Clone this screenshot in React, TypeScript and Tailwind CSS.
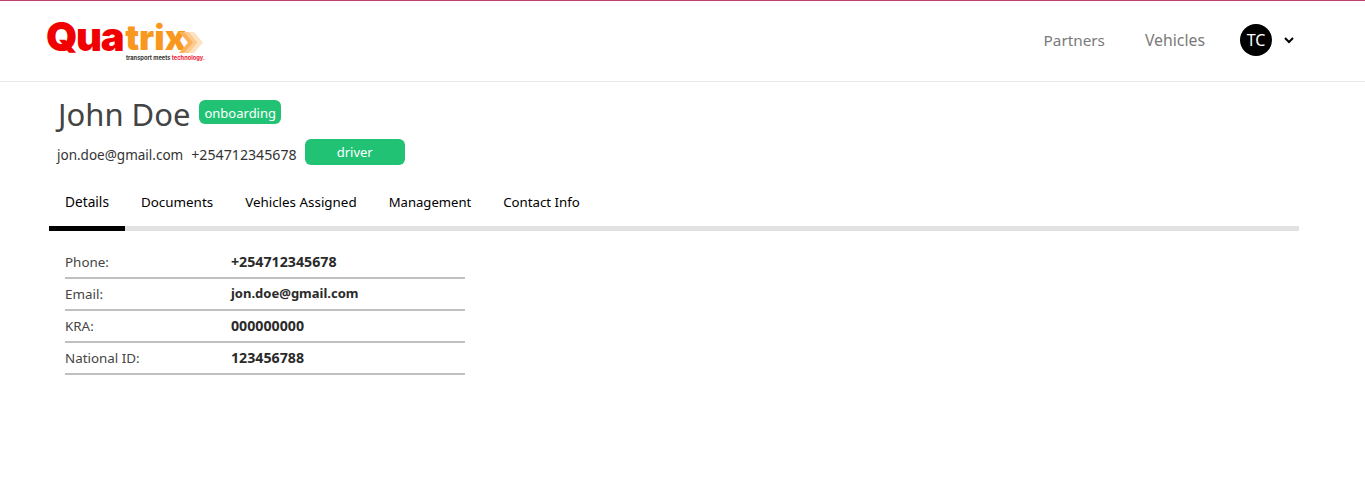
const tabs = [
  { name: "Details", size: "text-[13.7px]" },
  { name: "Documents", size: "text-[13.4px]" },
  { name: "Vehicles Assigned", size: "text-[13.4px]" },
  { name: "Management", size: "text-[13.1px]" },
  { name: "Contact Info", size: "text-[13.25px]" },
]

const rows = [
  { label: "Phone:", value: "+254712345678", size: "text-[14.2px]" },
  { label: "Email:", value: "jon.doe@gmail.com", size: "text-[13px]" },
  { label: "KRA:", value: "000000000", size: "text-[14.2px]" },
  { label: "National ID:", value: "123456788", size: "text-[14.2px]" },
]

function Logo() {
  return (
    <div className="relative h-[44px] w-[160px] font-['Inter',sans-serif]">
      <div className="flex h-[32px] items-center pt-[3px]">
        <span className="text-[40px] font-black leading-[32px] tracking-[-1.4px] text-[#f00000]">Qua</span>
        <span className="ml-[2px] text-[35px] font-black leading-[32px] text-[#f9981f]">trix</span>
      </div>
      {/* fading chevrons on the x */}
      <svg className="absolute left-[133px] top-[13px]" width="24" height="21" viewBox="0 0 24 21" fill="none">
        <path d="M0 0h6l9 10.5L6 21H0l9-10.5z" fill="#fbb05a" />
        <path d="M5 0h5l9 10.5L10 21H5l9-10.5z" fill="#fdca90" />
        <path d="M10 0h5l9 10.5L15 21h-5l9-10.5z" fill="#fee2c2" />
      </svg>
      <div className="absolute left-[80px] top-[36px] whitespace-nowrap text-[5.7px] font-bold leading-none text-[#333]">
        transport meets <span className="text-[#f0203a]">technology.</span>
      </div>
    </div>
  )
}

export default function App() {
  return (
    <div className="min-h-[480px] bg-white font-['Noto_Sans',sans-serif]">
      <header className="flex h-[82px] items-center justify-between border-t border-b border-t-[#c2406f] border-b-[#e8e8e8] pl-[46px] pr-[70px]">
        <Logo />
        <nav className="flex items-center pb-[2px] text-[#7a7a7a]">
          <a className="mr-10 -mt-[1px] text-[15.3px] leading-6">Partners</a>
          <a className="mr-[35px] text-[15.8px] leading-6">Vehicles</a>
          <div className="flex h-8 w-8 items-center justify-center rounded-full bg-black text-base text-white">TC</div>
          <svg className="ml-[11px]" width="12" height="12" viewBox="0 0 12 12" fill="none">
            <path d="M2 4l4 4 4-4" stroke="#000" strokeWidth="2" />
          </svg>
        </nav>
      </header>

      <main className="pl-[49px] pr-[66px]">
        <div className="flex items-start pl-[9px] pt-[10px]">
          <h1 className="text-[31px] leading-[44px] text-[#444]">John Doe</h1>
          <span className="ml-[9px] mt-[8px] rounded-md bg-[#22c275] px-[5px] pt-[2px] text-[13px] leading-[22px] text-white">onboarding</span>
        </div>
        <div className="mt-[3px] flex h-[26px] items-start pl-2 text-[#333]">
          <span className="mt-[6px] text-[13.5px] leading-5">jon.doe@gmail.com</span>
          <span className="ml-2 mt-[6px] text-[14.2px] leading-5">+254712345678</span>
          <span className="ml-2 w-[100px] rounded-md bg-[#22c275] text-center text-[13px] leading-[26px] text-white">driver</span>
        </div>

        <div className="mt-[12px] flex border-b-[5px] border-[#e2e2e2]">
          {tabs.map((tab, i) => (
            <div
              key={tab.name}
              className={
                i === 0
                  ? `-mb-[5px] border-b-[5px] border-black px-4 pb-[14px] pt-[15px] leading-[20px] text-black ${tab.size}`
                  : `px-4 pb-[14px] pt-[15px] leading-[20px] text-black ${tab.size}`
              }
            >
              {tab.name}
            </div>
          ))}
        </div>

        <div className="ml-4 mt-[16px] w-[400px]">
          {rows.map((row) => (
            <div key={row.label} className="flex h-8 items-center border-b-2 border-[#c0c0c0] text-[13.4px]">
              <span className="w-[166px] text-[#444]">{row.label}</span>
              <span className={`-mt-[1px] font-bold text-[#2a2a2a] ${row.size}`}>{row.value}</span>
            </div>
          ))}
        </div>
      </main>
    </div>
  )
}
